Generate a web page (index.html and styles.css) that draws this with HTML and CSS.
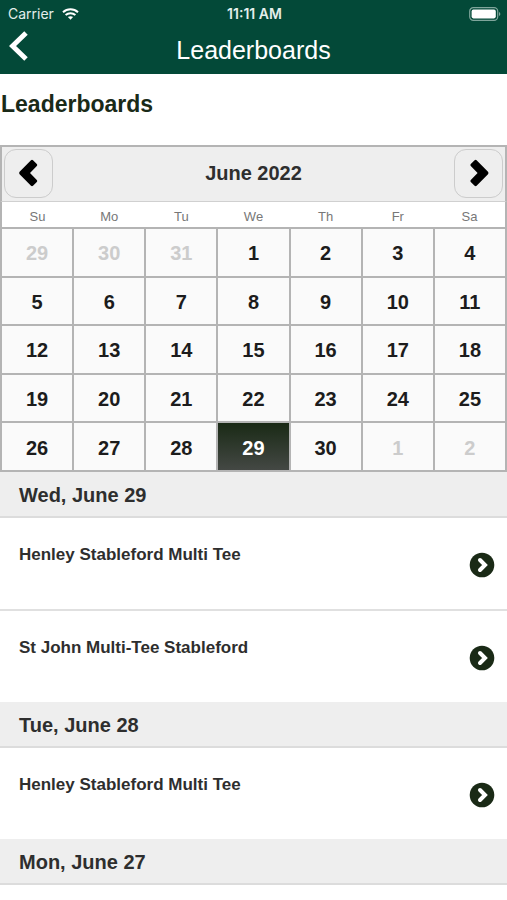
FILE: index.html
```html
<!DOCTYPE html>
<html lang="en">
<head>
  <meta charset="UTF-8">
  <meta name="viewport" content="width=device-width, initial-scale=1">
  <title>Leaderboards</title>
  <link rel="stylesheet" href="styles.css">
</head>
<body>

<header class="topbar">
  <div class="status">
    <div class="carrier">
      <span>Carrier</span>
      <svg class="wifi" viewBox="0 0 17 12" aria-hidden="true">
        <path d="M1 4.2C5.2 0.3 11.8 0.3 16 4.2" />
        <path d="M3.6 7C6.4 4.5 10.6 4.5 13.4 7" />
        <path class="dot" d="M5.9 9.1C7.4 7.8 9.6 7.8 11.1 9.1L8.5 11.8Z" />
      </svg>
    </div>
    <span class="time">11:11 AM</span>
    <svg class="battery" viewBox="0 0 32 14" aria-hidden="true">
      <rect class="shell" x="0.7" y="0.7" width="28" height="12.6" rx="3.6" />
      <rect class="level" x="2.6" y="2.6" width="24.2" height="8.8" rx="1.8" />
      <path class="cap" d="M30 5C31.8 5.6 31.8 8.4 30 9Z" />
    </svg>
  </div>
  <nav class="navbar">
    <button type="button" class="back" aria-label="Back">
      <svg viewBox="0 0 20 30" aria-hidden="true"><path d="M17 2L3.5 15L17 28" /></svg>
    </button>
    <div class="navtitle">Leaderboards</div>
  </nav>
</header>

<main>
  <h1>Leaderboards</h1>

  <section class="calendar">
    <div class="month">
      <button type="button" class="step" aria-label="Previous month">
        <svg viewBox="0 0 20 28" aria-hidden="true"><path d="M0.6 12.8L12 1.3Q13 0.4 14 1.3L17.8 5Q18.8 6 17.8 7L11 14L17.8 21Q18.8 22 17.8 23L14 26.7Q13 27.6 12 26.7L0.6 15.2Q-0.4 14 0.6 12.8Z" /></svg>
      </button>
      <h2>June 2022</h2>
      <button type="button" class="step" aria-label="Next month">
        <svg viewBox="0 0 20 28" aria-hidden="true"><path d="M20 12.8L8.6 1.3Q7.6 0.4 6.6 1.3L2.8 5Q1.8 6 2.8 7L9.6 14L2.8 21Q1.8 22 2.8 23L6.6 26.7Q7.6 27.6 8.6 26.7L20 15.2Q21 14 20 12.8Z" /></svg>
      </button>
    </div>
    <table>
      <thead>
        <tr><th>Su</th><th>Mo</th><th>Tu</th><th>We</th><th>Th</th><th>Fr</th><th>Sa</th></tr>
      </thead>
      <tbody>
        <tr>
          <td class="other"><button type="button">29</button></td>
          <td class="other"><button type="button">30</button></td>
          <td class="other"><button type="button">31</button></td>
          <td><button type="button">1</button></td>
          <td><button type="button">2</button></td>
          <td><button type="button">3</button></td>
          <td><button type="button">4</button></td>
        </tr>
        <tr>
          <td><button type="button">5</button></td>
          <td><button type="button">6</button></td>
          <td><button type="button">7</button></td>
          <td><button type="button">8</button></td>
          <td><button type="button">9</button></td>
          <td><button type="button">10</button></td>
          <td><button type="button">11</button></td>
        </tr>
        <tr>
          <td><button type="button">12</button></td>
          <td><button type="button">13</button></td>
          <td><button type="button">14</button></td>
          <td><button type="button">15</button></td>
          <td><button type="button">16</button></td>
          <td><button type="button">17</button></td>
          <td><button type="button">18</button></td>
        </tr>
        <tr>
          <td><button type="button">19</button></td>
          <td><button type="button">20</button></td>
          <td><button type="button">21</button></td>
          <td><button type="button">22</button></td>
          <td><button type="button">23</button></td>
          <td><button type="button">24</button></td>
          <td><button type="button">25</button></td>
        </tr>
        <tr>
          <td><button type="button">26</button></td>
          <td><button type="button">27</button></td>
          <td><button type="button">28</button></td>
          <td class="selected"><button type="button">29</button></td>
          <td><button type="button">30</button></td>
          <td class="other"><button type="button">1</button></td>
          <td class="other"><button type="button">2</button></td>
        </tr>
      </tbody>
    </table>
  </section>

  <section class="events">
    <h3>Wed, June 29</h3>
    <a class="event" href="#">
      <span>Henley Stableford Multi Tee</span>
      <svg viewBox="0 0 26 26" aria-hidden="true"><circle cx="13" cy="13" r="12.3" /><path d="M11 8L16 13L11 18" /></svg>
    </a>
    <a class="event" href="#">
      <span>St John Multi-Tee Stableford</span>
      <svg viewBox="0 0 26 26" aria-hidden="true"><circle cx="13" cy="13" r="12.3" /><path d="M11 8L16 13L11 18" /></svg>
    </a>

    <h3>Tue, June 28</h3>
    <a class="event" href="#">
      <span>Henley Stableford Multi Tee</span>
      <svg viewBox="0 0 26 26" aria-hidden="true"><circle cx="13" cy="13" r="12.3" /><path d="M11 8L16 13L11 18" /></svg>
    </a>

    <h3>Mon, June 27</h3>
  </section>
</main>

</body>
</html>
```
FILE: styles.css
```css
* {
  box-sizing: border-box;
}

body {
  margin: 0;
  background: #fff;
  color: #2e2e2e;
  font-family: "Liberation Sans", Arial, sans-serif;
}

button {
  margin: 0;
  padding: 0;
  border: none;
  background: none;
  color: inherit;
  font: inherit;
  cursor: pointer;
}

h1, h2, h3 {
  margin: 0;
}

/* top bar */
.topbar {
  background: #034938;
  color: #fff;
}

.status {
  display: grid;
  grid-template-columns: 1fr auto 1fr;
  align-items: center;
  height: 27px;
  padding: 0 6px 0 8px;
  color: #e4eeeb;
  font: 14px/20px Inter, sans-serif;
}

.carrier {
  display: flex;
  align-items: center;
  gap: 8px;
}

.time {
  font-weight: 600;
}

.wifi {
  width: 17px;
  height: 12px;
  fill: none;
  stroke: #fff;
  stroke-width: 2;
}

.wifi .dot {
  fill: #fff;
  stroke: none;
}

.battery {
  justify-self: end;
  width: 32px;
  height: 14px;
}

.shell {
  fill: none;
  stroke: #7fa59b;
  stroke-width: 1.2;
}

.level {
  fill: #fff;
}

.cap {
  fill: #7fa59b;
}

.navbar {
  display: grid;
  grid-template-columns: 1fr auto 1fr;
  height: 47px;
  padding: 0 9px;
}

.back {
  justify-self: start;
  width: 20px;
  height: 38px;
}

.back svg {
  display: block;
  width: 20px;
  height: 30px;
  fill: none;
  stroke: #fff;
  stroke-width: 5;
}

.navtitle {
  font-size: 25px;
  line-height: 47px;
}

h1 {
  padding: 16px 1px 26px;
  color: #1a2a18;
  font-size: 23px;
  line-height: 29px;
}

/* calendar */
.month {
  display: flex;
  align-items: center;
  justify-content: space-between;
  height: 57px;
  padding: 0 2px 2px;
  border: 2px solid #b4b4b4;
  border-bottom: 1px solid #d0d0d0;
  background: #eee;
}

.month h2 {
  font-size: 20px;
  line-height: 24px;
}

.step {
  display: flex;
  align-items: center;
  justify-content: center;
  width: 49px;
  height: 49px;
  border: 1px solid #ccc;
  border-radius: 12px;
}

.step svg {
  width: 20px;
  height: 28px;
  fill: #000;
  overflow: visible;
}

.calendar table {
  width: 100%;
  height: 270px;
  border-collapse: collapse;
  table-layout: fixed;
}

.calendar th {
  height: 26px;
  padding: 5px 0 0;
  color: #777;
  font-size: 13px;
  font-weight: normal;
  line-height: 20px;
}

.calendar thead tr {
  border: solid #b4b4b4;
  border-width: 0 2px;
}

.calendar td {
  padding: 0;
  border: 2px solid #b4b4b4;
  background: #fafafa;
  color: #1c1c1c;
}

.calendar td button {
  display: block;
  width: 100%;
  height: 46px;
  padding-top: 3px;
  font-size: 20px;
  font-weight: bold;
}

.calendar .other {
  color: #ccc;
}

.calendar .selected {
  background: linear-gradient(#1a2a16, #444844);
  color: #fff;
  text-shadow: 0 1px 1px #000;
}

/* event list */
.events h3 {
  padding: 10px 19px 8px;
  border-bottom: 2px solid #dcdcdc;
  background: #eee;
  font-size: 20px;
  line-height: 26px;
}

.event {
  display: flex;
  align-items: center;
  justify-content: space-between;
  box-sizing: content-box;
  height: 89px;
  padding: 2px 12px 0 19px;
  color: #2e2e2e;
  font-size: 17px;
  font-weight: bold;
  line-height: 20px;
  text-decoration: none;
}

.event + .event {
  border-top: 2px solid #e0e0e0;
}

.event span {
  padding-bottom: 20px;
}

.event svg {
  width: 26px;
  height: 26px;
  fill: #1a2a16;
}

.event path {
  fill: none;
  stroke: #fff;
  stroke-width: 4;
  stroke-linecap: round;
}
```
